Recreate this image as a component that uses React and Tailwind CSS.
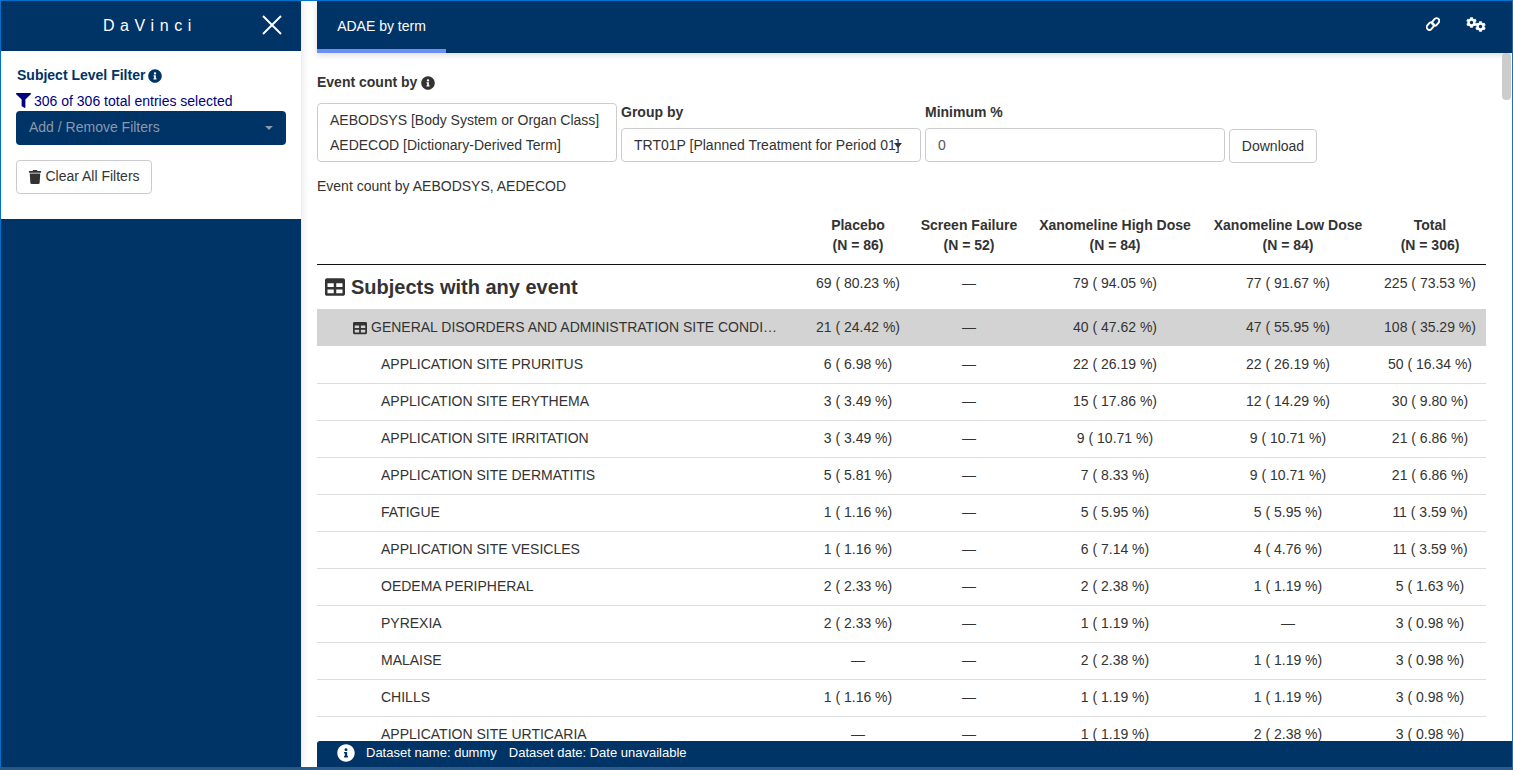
import { FaCog, FaFilter, FaInfoCircle, FaTable, FaTrash } from 'react-icons/fa';

const columns = [
    { name: 'Placebo', n: '(N = 86)', width: 'w-[104px]' },
    { name: 'Screen Failure', n: '(N = 52)', width: 'w-[118px]' },
    { name: 'Xanomeline High Dose', n: '(N = 84)', width: 'w-[174px]' },
    { name: 'Xanomeline Low Dose', n: '(N = 84)', width: 'w-[172px]' },
    { name: 'Total', n: '(N = 306)', width: 'w-[112px]' },
];

const rows = [
    ['APPLICATION SITE PRURITUS', '6 ( 6.98 %)', '—', '22 ( 26.19 %)', '22 ( 26.19 %)', '50 ( 16.34 %)'],
    ['APPLICATION SITE ERYTHEMA', '3 ( 3.49 %)', '—', '15 ( 17.86 %)', '12 ( 14.29 %)', '30 ( 9.80 %)'],
    ['APPLICATION SITE IRRITATION', '3 ( 3.49 %)', '—', '9 ( 10.71 %)', '9 ( 10.71 %)', '21 ( 6.86 %)'],
    ['APPLICATION SITE DERMATITIS', '5 ( 5.81 %)', '—', '7 ( 8.33 %)', '9 ( 10.71 %)', '21 ( 6.86 %)'],
    ['FATIGUE', '1 ( 1.16 %)', '—', '5 ( 5.95 %)', '5 ( 5.95 %)', '11 ( 3.59 %)'],
    ['APPLICATION SITE VESICLES', '1 ( 1.16 %)', '—', '6 ( 7.14 %)', '4 ( 4.76 %)', '11 ( 3.59 %)'],
    ['OEDEMA PERIPHERAL', '2 ( 2.33 %)', '—', '2 ( 2.38 %)', '1 ( 1.19 %)', '5 ( 1.63 %)'],
    ['PYREXIA', '2 ( 2.33 %)', '—', '1 ( 1.19 %)', '—', '3 ( 0.98 %)'],
    ['MALAISE', '—', '—', '2 ( 2.38 %)', '1 ( 1.19 %)', '3 ( 0.98 %)'],
    ['CHILLS', '1 ( 1.16 %)', '—', '1 ( 1.19 %)', '1 ( 1.19 %)', '3 ( 0.98 %)'],
    ['APPLICATION SITE URTICARIA', '—', '—', '1 ( 1.19 %)', '2 ( 2.38 %)', '3 ( 0.98 %)'],
];

const Sidebar = () => (
    <aside className="w-[300px] shrink-0 flex flex-col bg-[#003366] shadow-[0_0_8px_rgba(0,0,0,0.15)]">
        <div className="h-[50px] flex items-center relative">
            <span className="w-full text-center pr-[2px] text-[16px] tracking-[5.6px] text-white">DaVinci</span>
            <svg className="absolute right-[19px] top-[14px]" width="20" height="20" viewBox="0 0 20 20" fill="none" stroke="#fff" strokeWidth="1.9">
                <path d="M1 1 19 19M19 1 1 19" />
            </svg>
        </div>
        <div className="h-[168px] bg-white pl-[15px] pr-[15px] pt-[16px]">
            <div className="pl-[1px] flex items-center gap-[3px] h-[17px] font-bold text-[#003366]">
                Subject Level Filter <FaInfoCircle className="text-[14px]" />
            </div>
            <div className="mt-[8px] flex items-center gap-[3px] h-[17px] text-[#000080] leading-none">
                <FaFilter className="text-[15px]" />
                <span>306 of 306 total entries selected</span>
            </div>
            <div className="mt-[2px] h-[34px] w-[270px] rounded-[4px] bg-[#003366] flex items-center justify-between pl-[13px] pr-[13px] pb-[2px] text-[#8b99ab]">
                <span>Add / Remove Filters</span>
                <span className="mt-[2px] border-x-[4px] border-t-[4px] border-x-transparent border-t-[#8b99ab]"></span>
            </div>
            <button className="mt-[15px] h-[34px] w-[136px] rounded-[4px] border border-[#cccccc] bg-white flex items-center justify-center gap-[3px] pb-[2px] text-[#333333]">
                <FaTrash className="text-[14px] mt-[2px]" /> Clear All Filters
            </button>
        </div>
    </aside>
);

const DataRow = ({ row }) => (
    <tr className="h-[37px] border-b border-[#dddddd]">
        <td className="pl-[64px]">{row[0]}</td>
        {row.slice(1).map((cell, i) => (
            <td key={i} className="text-center">{cell}</td>
        ))}
    </tr>
);

const ResultsTable = () => (
    <table className="w-[1169px] table-fixed border-collapse">
        <thead>
            <tr className="h-[69px] border-b border-[#111111]">
                <th></th>
                {columns.map((c) => (
                    <th key={c.name} className={`${c.width} align-bottom pb-[9px] font-bold leading-[20px]`}>
                        <div className="whitespace-nowrap">{c.name}</div>
                        <div>{c.n}</div>
                    </th>
                ))}
            </tr>
        </thead>
        <tbody>
            <tr className="h-[45px]">
                <td className="pl-[8px] pt-[1px] text-[20px] font-bold leading-none">
                    <span className="flex items-center gap-[6px]">
                        <FaTable className="text-[20px]" /> Subjects with any event
                    </span>
                </td>
                <td className="text-center align-top pt-[8px]">69 ( 80.23 %)</td>
                <td className="text-center align-top pt-[8px]">—</td>
                <td className="text-center align-top pt-[8px]">79 ( 94.05 %)</td>
                <td className="text-center align-top pt-[8px]">77 ( 91.67 %)</td>
                <td className="text-center align-top pt-[8px]">225 ( 73.53 %)</td>
            </tr>
            <tr className="h-[37px] bg-[#d3d3d3]">
                <td className="pl-[36px]">
                    <span className="flex items-center gap-[4px] whitespace-nowrap">
                        <FaTable className="text-[14px] shrink-0" />
                        <span>GENERAL DISORDERS AND ADMINISTRATION SITE CONDI…</span>
                    </span>
                </td>
                <td className="text-center">21 ( 24.42 %)</td>
                <td className="text-center">—</td>
                <td className="text-center">40 ( 47.62 %)</td>
                <td className="text-center">47 ( 55.95 %)</td>
                <td className="text-center">108 ( 35.29 %)</td>
            </tr>
            {rows.map((row) => (
                <DataRow key={row[0]} row={row} />
            ))}
        </tbody>
    </table>
);

const Controls = () => (
    <div className="flex items-end gap-[4px] mt-[12px]">
        <div className="w-[300px] h-[59px] rounded-[4px] border border-[#cccccc] pl-[12px] pt-[4px] leading-[25px]">
            <div>AEBODSYS [Body System or Organ Class]</div>
            <div>AEDECOD [Dictionary-Derived Term]</div>
        </div>
        <div className="w-[300px]">
            <div className="font-bold h-[17px] mb-[7px] leading-[17px]">Group by</div>
            <div className="relative h-[34px] rounded-[4px] border border-[#cccccc] pl-[12px] flex items-center overflow-hidden whitespace-nowrap">
                TRT01P [Planned Treatment for Period 01]
                <span className="absolute right-[18px] top-[14px] border-x-[4px] border-t-[5px] border-x-transparent border-t-[#333333]"></span>
            </div>
        </div>
        <div className="w-[300px]">
            <div className="font-bold h-[17px] mb-[7px] leading-[17px]">Minimum %</div>
            <div className="h-[34px] rounded-[4px] border border-[#cccccc] pl-[12px] flex items-center text-[#555555]">0</div>
        </div>
        <button className="h-[34px] w-[88px] -mb-px rounded-[4px] border border-[#cccccc] bg-white text-[#333333]">Download</button>
    </div>
);

export default function App() {
    return (
        <div className="h-[770px] w-[1513px] overflow-hidden bg-[#2b5c8a] font-['Liberation_Sans',Arial,sans-serif] text-[14px] text-[#333333]">
            <div className="h-[767px] flex gap-[16px] bg-white border-l border-t border-r border-[#0078d7]">
                <Sidebar />
                <main className="flex-1 min-w-0 flex flex-col relative">
                    <header className="h-[52px] shrink-0 bg-[#003366] flex justify-between shadow-[0_2px_6px_rgba(0,0,0,0.15)] z-10">
                        <div className="w-[129px] h-[52px] border-b-[4px] border-[#6f8ff0] flex items-center justify-center text-white pt-[2px]">
                            ADAE by term
                        </div>
                        <div className="flex items-start gap-[26px] pr-[26px] pt-[16px] text-white">
                            <svg width="14" height="14" viewBox="0 0 14 14" fill="none" stroke="#fff" strokeWidth="1.9">
                                <rect x="1.6" y="5.2" width="5.4" height="8" rx="2.7" transform="rotate(40 4.3 9.2)" />
                                <rect x="7" y="0.8" width="5.4" height="8" rx="2.7" transform="rotate(40 9.7 4.8)" />
                            </svg>
                            <div className="flex items-start -mt-px">
                                <FaCog className="text-[11px] mt-[1px]" />
                                <FaCog className="text-[11px] mt-[5px] -ml-[2px]" />
                            </div>
                        </div>
                    </header>
                    <div className="flex-1 min-h-0 overflow-hidden">
                        <div className="pt-[21px]">
                            <div className="flex items-center gap-[4px] h-[17px] font-bold">
                                Event count by <FaInfoCircle className="text-[14px]" />
                            </div>
                            <Controls />
                            <div className="mt-[16px] h-[17px] leading-[17px]">Event count by AEBODSYS, AEDECOD</div>
                            <ResultsTable />
                        </div>
                    </div>
                    <footer className="h-[26px] shrink-0 rounded-tl-[3px] bg-[#003366] flex items-center pl-[20px] gap-[11px] pb-[2px] text-[13px] text-white">
                        <FaInfoCircle className="text-[18px]" />
                        <span>Dataset name: dummy</span>
                        <span className="ml-px">Dataset date: Date unavailable</span>
                    </footer>
                    <div className="absolute right-[1px] top-[52px] h-[47px] w-[9px] rounded-[4px] bg-[#cccccc] z-20"></div>
                </main>
            </div>
        </div>
    );
}
